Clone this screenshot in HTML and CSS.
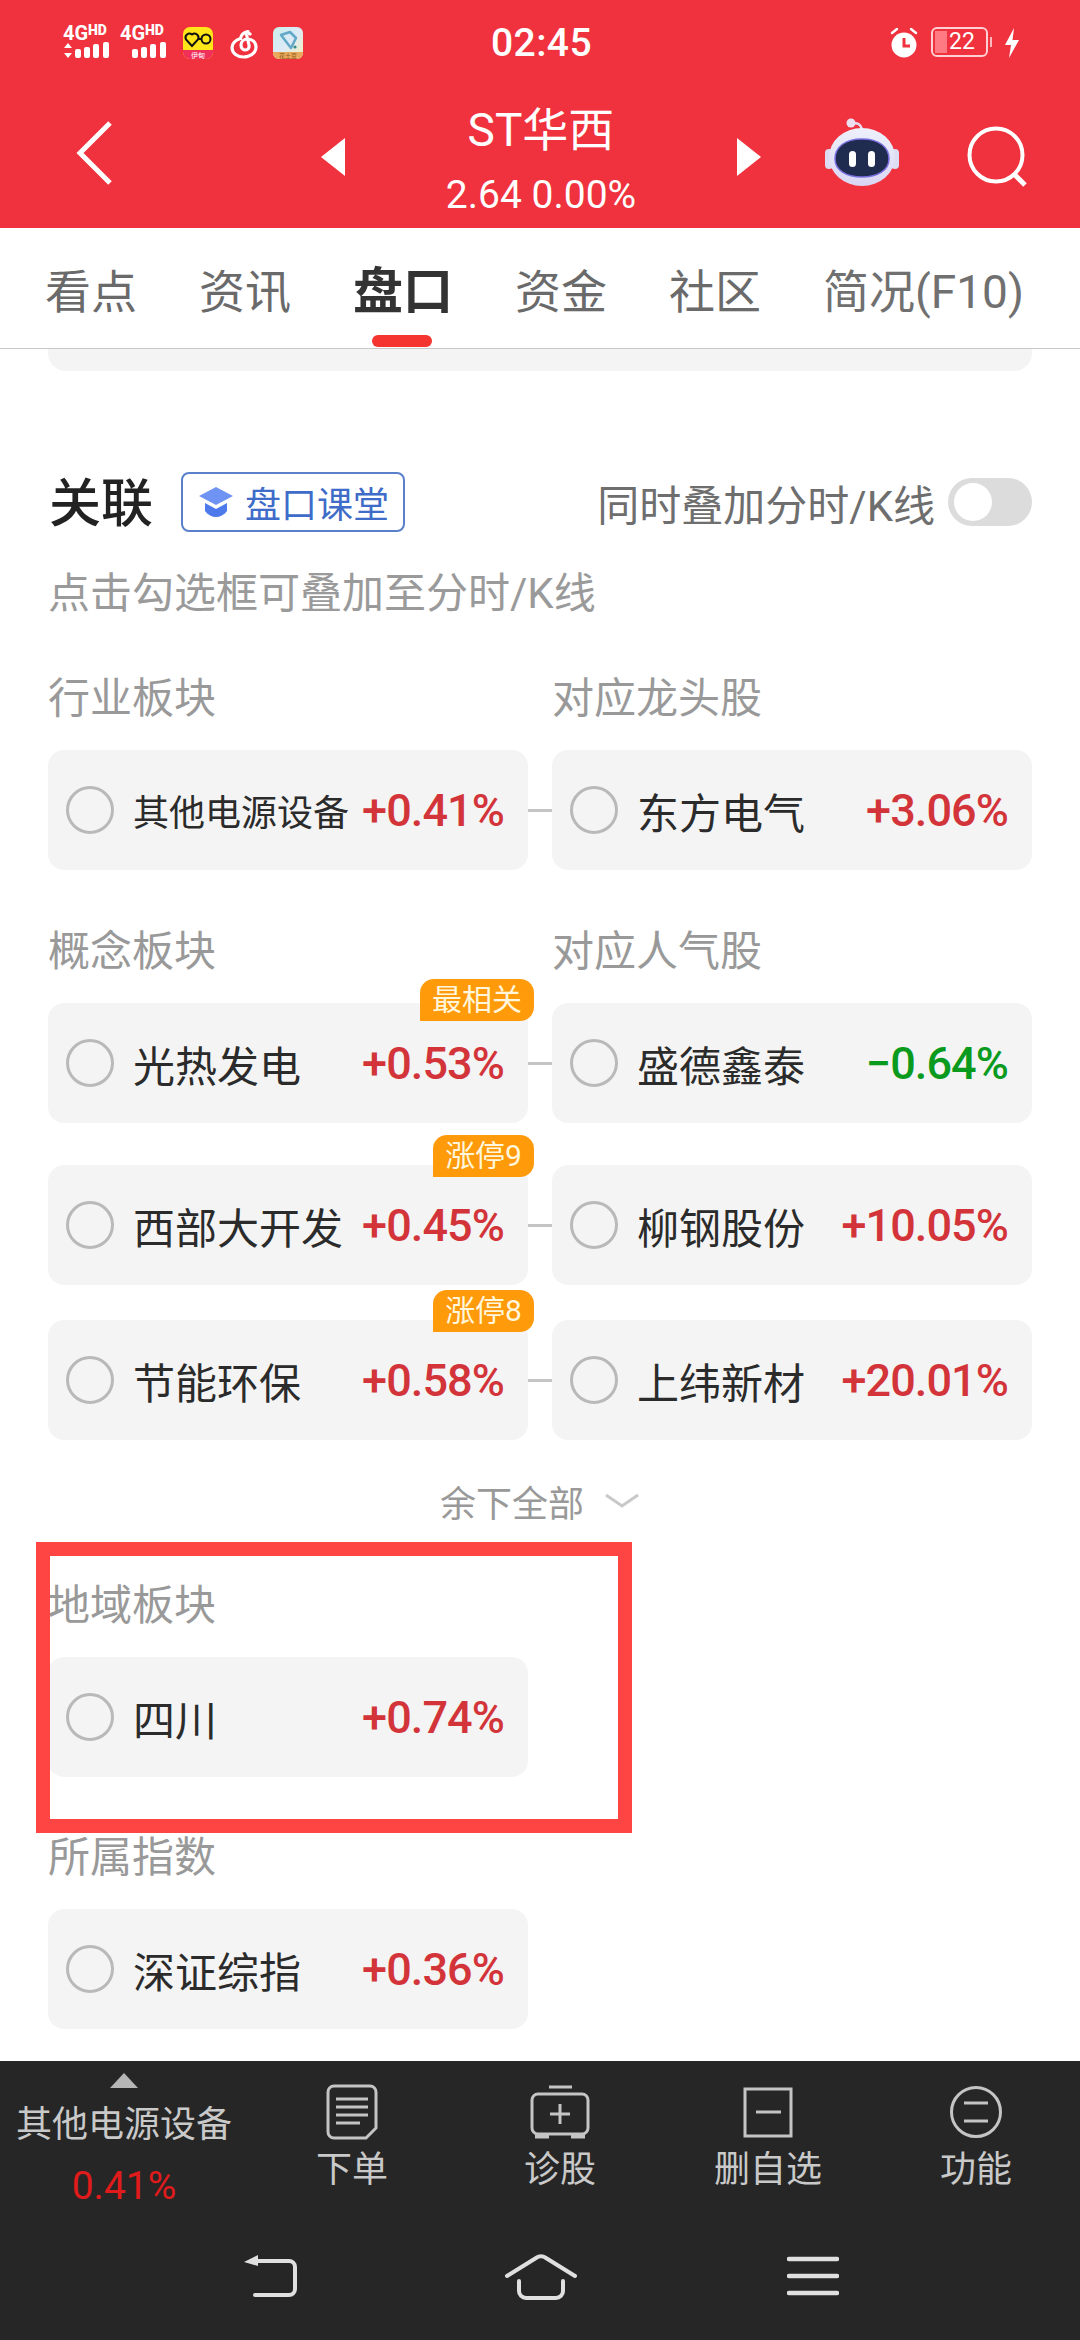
FILE: index.html
```html
<!DOCTYPE html>
<html lang="zh-CN">
<head>
<meta charset="utf-8">
<title>ST华西</title>
<link rel="stylesheet" href="styles.css">
</head>
<body>
<div class="page">
  <header class="top">
    <div class="status">
      <div class="status-left">
        <svg class="sig" width="48" height="34" viewBox="0 0 48 34"><text class="sig-g" x="0" y="15">4G</text><text class="sig-hd" x="25" y="10">HD</text><path d="M5 18l4 5H1zM5 33l4-5H1z" fill="#fff"/><rect x="12" y="24" width="6" height="9" rx="2" fill="#fff"/><rect x="21" y="22" width="6" height="11" rx="2" fill="#fff"/><rect x="30" y="19" width="6" height="14" rx="2" fill="#fff"/><rect x="40" y="17" width="6" height="16" rx="2" fill="#fff"/></svg>
        <svg class="sig" width="48" height="34" viewBox="0 0 48 34"><text class="sig-g" x="0" y="15">4G</text><text class="sig-hd" x="25" y="10">HD</text><rect x="12" y="24" width="6" height="9" rx="2" fill="#fff"/><rect x="21" y="22" width="6" height="11" rx="2" fill="#fff"/><rect x="30" y="19" width="6" height="14" rx="2" fill="#fff"/><rect x="40" y="17" width="6" height="16" rx="2" fill="#fff"/></svg>
        <svg class="mini mini-a" width="30" height="32" viewBox="0 0 30 32"><rect width="30" height="32" rx="7" fill="#ffe619"/><path d="M0 23h30v2a7 7 0 0 1-7 7H7a7 7 0 0 1-7-7z" fill="#f0305a"/><path d="M9 19L3 12.500a4 4 0 0 1 6-5 4 4 0 0 1 6 5z" fill="none" stroke="#111" stroke-width="2"/><circle cx="23" cy="12" r="4.500" fill="#ffe619" stroke="#111" stroke-width="2"/><path d="M15 12h4" stroke="#111" stroke-width="2"/><text class="mini-label" x="15" y="30.500">伊甸</text></svg>
        <svg class="mini mini-b" width="28" height="32" viewBox="0 0 28 32"><path d="M18 4.500c-5 1-7 4-7.500 7C5 13 2 17 2 20.500 2 26.500 7.500 30 13.500 30 20 30 26 26 26 20c0-5-4-8-8-8-4.500 0-7 3-7 6 0 3 2 5 4.500 5 2.500 0 4-2 3.500-5L16.500 7.500c-.3-1.500 1.500-2 3.500-.5" fill="none" stroke="#fff" stroke-width="3.200" stroke-linecap="round"/></svg>
        <svg class="mini mini-c" width="30" height="32" viewBox="0 0 30 32"><defs><linearGradient id="appFace" x1="0" y1="0" x2="1" y2="1"><stop offset="0" stop-color="#c9f0ea"/><stop offset=".5" stop-color="#ddeaf8"/><stop offset="1" stop-color="#f4efb6"/></linearGradient></defs><rect width="30" height="32" rx="6" fill="url(#appFace)"/><path d="M0 25h30v1a6 6 0 0 1-6 6H6a6 6 0 0 1-6-6z" fill="#e9a85b"/><path d="M8 8l9-3 6 6-5 10z" fill="none" stroke="#62a8c8" stroke-width="2.500" stroke-linejoin="round"/><circle cx="22" cy="20" r="1.600" fill="#3a8c88"/><text class="mini-label mini-label-c" x="15" y="30.500">花土豆</text></svg>
      </div>
      <div class="clock">02:45</div>
      <div class="status-right">
        <svg width="30" height="32" viewBox="0 0 30 32"><circle cx="15" cy="18" r="12.500" fill="#fff"/><path d="M3 6l5-4M27 6l-5-4" stroke="#fff" stroke-width="2.500" stroke-linecap="round"/><path d="M15 11v8h6" fill="none" stroke="#ef323d" stroke-width="3"/></svg>
        <div class="battery"><span class="battery-fill"></span><span class="battery-num">22</span></div>
        <span class="battery-cap"></span>
        <svg class="bolt" width="16" height="32" viewBox="0 0 16 32"><path d="M10 1L1 18h6l-2 13 10-18H8.500z" fill="#fff"/></svg>
      </div>
    </div>
    <div class="navline">
      <svg class="back" width="40" height="66" viewBox="0 0 40 66"><path d="M35 3L5 33l30 30" fill="none" stroke="#fff" stroke-width="5"/></svg>
      <svg class="tri tri-left" width="26" height="38" viewBox="0 0 26 38"><path d="M24 0v38L0 19z" fill="#fff"/></svg>
      <div class="stock">
        <div class="stock-name">ST华西</div>
        <div class="stock-quote">2.64 0.00%</div>
      </div>
      <svg class="tri tri-right" width="26" height="38" viewBox="0 0 26 38"><path d="M2 0v38l24-19z" fill="#fff"/></svg>
      <svg class="robot" width="74" height="68" viewBox="0 0 74 68"><defs><linearGradient id="shell" x1="0" y1="0" x2="0" y2="1"><stop offset="0" stop-color="#eef0fb"/><stop offset="1" stop-color="#d9d6f4"/></linearGradient></defs><path d="M27 6c5-2 9 0 10 6" fill="none" stroke="#eadff0" stroke-width="2.500"/><circle cx="26" cy="5" r="4.500" fill="#ebdff0"/><rect x="0" y="31" width="8" height="20" rx="4" fill="#dcdcf2"/><rect x="66" y="31" width="8" height="20" rx="4" fill="#dcdcf2"/><ellipse cx="37" cy="39" rx="33" ry="29" fill="url(#shell)"/><path d="M10 41c0-12 10-20 27-20s27 8 27 20c0 11-11 18-27 18S10 52 10 41z" fill="#1f2c50" stroke="#7a6fe0" stroke-width="1.500"/><rect x="24" y="33" width="7" height="16" rx="3.500" fill="#fff"/><rect x="43" y="33" width="7" height="16" rx="3.500" fill="#fff"/></svg>
      <svg class="search" width="62" height="62" viewBox="0 0 62 62"><circle cx="29" cy="29" r="26.500" fill="none" stroke="#fff" stroke-width="4"/><path d="M47 48l11 11" stroke="#fff" stroke-width="5"/></svg>
    </div>
  </header>

  <nav class="tabs">
    <span class="tab">看点</span>
    <span class="tab">资讯</span>
    <span class="tab tab-on">盘口</span>
    <span class="tab">资金</span>
    <span class="tab">社区</span>
    <span class="tab tab-fade">简况(F10)</span>
  </nav>

  <main class="content">
    <div class="scrolled-card"></div>

    <div class="head">
      <h2 class="head-title">关联</h2>
      <div class="chip">
        <svg width="36" height="32" viewBox="0 0 36 32"><path d="M18 1l17 9-17 9-17-9z" fill="#6f93f2"/><path d="M7 17v8c3 4 7 6 11 6s8-2 11-6v-8l-11 6z" fill="#4d7bec"/></svg>
        <span>盘口课堂</span>
      </div>
      <div class="head-right">
        <span class="overlay-label">同时叠加分时/K线</span>
        <span class="switch"><span class="knob"></span></span>
      </div>
    </div>
    <p class="hint">点击勾选框可叠加至分时/K线</p>

    <div class="pair labels labels-first"><span class="label">行业板块</span><span></span><span class="label">对应龙头股</span></div>
    <div class="pair">
      <div class="item"><i class="radio"></i><span class="name name-small">其他电源设备</span><b class="pct">+0.41%</b></div>
      <span class="link"></span>
      <div class="item"><i class="radio"></i><span class="name">东方电气</span><b class="pct">+3.06%</b></div>
    </div>

    <div class="pair labels"><span class="label">概念板块</span><span></span><span class="label">对应人气股</span></div>
    <div class="pair">
      <div class="item"><em class="tag tag-first">最相关</em><i class="radio"></i><span class="name">光热发电</span><b class="pct">+0.53%</b></div>
      <span class="link"></span>
      <div class="item"><i class="radio"></i><span class="name">盛德鑫泰</span><b class="pct pct-down">−0.64%</b></div>
    </div>
    <div class="pair pair-wide">
      <div class="item"><em class="tag">涨停9</em><i class="radio"></i><span class="name">西部大开发</span><b class="pct">+0.45%</b></div>
      <span class="link"></span>
      <div class="item"><i class="radio"></i><span class="name">柳钢股份</span><b class="pct">+10.05%</b></div>
    </div>
    <div class="pair pair-tight">
      <div class="item"><em class="tag">涨停8</em><i class="radio"></i><span class="name">节能环保</span><b class="pct">+0.58%</b></div>
      <span class="link"></span>
      <div class="item"><i class="radio"></i><span class="name">上纬新材</span><b class="pct">+20.01%</b></div>
    </div>

    <div class="more">
      <span>余下全部</span>
      <svg width="36" height="16" viewBox="0 0 36 16"><path d="M2 2l16 11L34 2" fill="none" stroke="#c9c9c9" stroke-width="3"/></svg>
    </div>

    <div class="pair labels labels-region"><span class="label">地域板块</span></div>
    <div class="pair">
      <div class="item"><i class="radio"></i><span class="name">四川</span><b class="pct">+0.74%</b></div>
    </div>

    <div class="pair labels labels-index"><span class="label">所属指数</span></div>
    <div class="pair">
      <div class="item"><i class="radio"></i><span class="name">深证综指</span><b class="pct">+0.36%</b></div>
    </div>
  </main>

  <footer class="bottom">
    <div class="tools">
      <div class="plate">
        <span class="plate-arrow"></span>
        <span class="plate-name">其他电源设备</span>
        <span class="plate-pct">0.41%</span>
      </div>
      <div class="tool">
        <svg width="52" height="56" viewBox="0 0 52 56"><path d="M8 2h36a6 6 0 0 1 6 6v36l-10 10H8a6 6 0 0 1-6-6V8a6 6 0 0 1 6-6z" fill="none" stroke="#c4c4c4" stroke-width="3"/><path d="M10 15h32M10 23h32M10 31h32M10 39h24" stroke="#c4c4c4" stroke-width="3"/></svg>
        <span>下单</span>
      </div>
      <div class="tool">
        <svg width="60" height="56" viewBox="0 0 60 56"><path d="M19 3h23" stroke="#c4c4c4" stroke-width="3"/><rect x="2" y="10" width="56" height="40" rx="6" fill="none" stroke="#c4c4c4" stroke-width="3"/><path d="M30 20v20M20 30h20" stroke="#c4c4c4" stroke-width="3"/><path d="M5 52h14M41 52h14" stroke="#c4c4c4" stroke-width="5"/></svg>
        <span>诊股</span>
      </div>
      <div class="tool">
        <svg width="52" height="56" viewBox="0 0 52 56"><rect x="3" y="5" width="46" height="47" fill="none" stroke="#c4c4c4" stroke-width="3"/><path d="M14 28h25" stroke="#c4c4c4" stroke-width="3"/></svg>
        <span>删自选</span>
      </div>
      <div class="tool">
        <svg width="54" height="56" viewBox="0 0 54 56"><circle cx="27" cy="28" r="24.500" fill="none" stroke="#c4c4c4" stroke-width="3"/><path d="M15 19h24M15 37h24" stroke="#c4c4c4" stroke-width="3"/></svg>
        <span>功能</span>
      </div>
    </div>
    <div class="sysnav">
      <svg width="54" height="44" viewBox="0 0 54 44"><path d="M10 7h36a6 6 0 0 1 6 6v22a6 6 0 0 1-6 6H12" fill="none" stroke="#e0e0e0" stroke-width="4" stroke-linecap="round"/><path d="M15 1v11L1 8z" fill="#e0e0e0"/></svg>
      <svg width="72" height="46" viewBox="0 0 72 46"><path d="M2 22L31 4c3-2 7-2 10 0l29 18" fill="none" stroke="#e0e0e0" stroke-width="4" stroke-linecap="round"/><path d="M14 27v10a7 7 0 0 0 7 7h30a7 7 0 0 0 7-7V27" fill="none" stroke="#e0e0e0" stroke-width="4" stroke-linecap="round"/></svg>
      <svg width="52" height="44" viewBox="0 0 52 44"><path d="M2 5h48M2 22h48M2 39h48" stroke="#e0e0e0" stroke-width="4.500" stroke-linecap="round"/></svg>
    </div>
  </footer>

  <div class="highlight"></div>
</div>
</body>
</html>
```

FILE: styles.css
```css
* { box-sizing: border-box; }

html, body { margin: 0; padding: 0; }

body {
  background: #fff;
  font-family: Roboto, "Noto Sans CJK SC", sans-serif;
}

.page {
  position: relative;
  width: 1080px;
  height: 2340px;
  display: flex;
  flex-direction: column;
  overflow: hidden;
}

/* red header: system status line and stock title */
.top {
  height: 228px;
  background: #ef323d;
  color: #fff;
  flex: none;
}

.status {
  height: 84px;
  padding: 25px 60px 0 63px;
  display: grid;
  grid-template-columns: 1fr auto 1fr;
  align-items: start;
}

.status-left { display: flex; align-items: flex-start; }

.sig { margin-right: 9px; overflow: visible; }
.sig-g { font: 700 20px Roboto, sans-serif; fill: #fff; }
.sig-hd { font: 900 14px Roboto, sans-serif; fill: #fff; }

.mini { margin-top: 2px; }
.mini-a { margin-left: 6px; }
.mini-b { margin-left: 17px; }
.mini-c { margin-left: 15px; }
.mini-label { font: 7px "Noto Sans CJK SC", sans-serif; fill: #fff; text-anchor: middle; }
.mini-label-c { font-size: 6px; fill: #8a5a20; }

.clock {
  font-size: 39px;
  font-weight: 500;
  line-height: 34px;
  margin-top: 1px;
  letter-spacing: .4px;
}

.status-right { display: flex; justify-content: flex-end; align-items: flex-start; margin-top: 2px; }

.battery {
  position: relative;
  margin-left: 12px;
  width: 57px;
  height: 30px;
  border: 2px solid #ffd0d3;
  border-radius: 6px;
  overflow: hidden;
  text-align: center;
}
.battery-fill {
  position: absolute;
  left: 2px; top: 2px; bottom: 2px;
  width: 12px;
  background: #ff7a82;
}
.battery-num {
  position: relative;
  display: block;
  padding-left: 5px;
  font-size: 23px;
  line-height: 26px;
  color: #fff;
}
.battery-cap {
  width: 2px;
  height: 10px;
  margin: 10px 0 0 2px;
  background: #ffb8bc;
}
.bolt { margin-left: 12px; }

.navline {
  height: 144px;
  padding-left: 75px;
  display: flex;
  align-items: flex-start;
}
.back { margin-top: 36px; flex: none; }
.tri { margin-top: 54px; flex: none; }
.tri-left { margin-left: 206px; }
.stock {
  width: 388px;
  text-align: center;
  flex: none;
}
.stock-name {
  font-size: 46px;
  line-height: 60px;
  margin-top: 16px;
}
.stock-quote {
  font-size: 39px;
  line-height: 50px;
  margin-top: 10px;
}
.robot { margin: 34px 0 0 64px; flex: none; }
.search { margin: 42px 0 0 68px; flex: none; }

/* tab strip */
.tabs {
  position: relative;
  height: 121px;
  padding: 0 0 0 45px;
  display: flex;
  gap: 62px;
  align-items: center;
  flex: none;
  border-bottom: 1px solid #c8c8c8;
  font-size: 46px;
  color: #6a6a6a;
  white-space: nowrap;
}
.tab { position: relative; line-height: 60px; margin-top: 8px; }
.tab-on { font-size: 50px; font-weight: 700; color: #333; }
.tab-on::after {
  content: "";
  position: absolute;
  left: 19px;
  right: 21px;
  top: 73px;
  height: 12px;
  border-radius: 6px;
  background: #f5352f;
}
.tab-fade { color: #707070; }

/* scrolling body */
.content {
  flex: 1;
  min-height: 0;
  padding: 0 48px;
  overflow: hidden;
}

.scrolled-card {
  height: 22px;
  background: #f4f4f4;
  border-radius: 0 0 18px 18px;
}

.head {
  margin-top: 101px;
  height: 60px;
  display: flex;
  align-items: center;
}
.head-title {
  margin: 6px 0 0 1px;
  font-size: 52px;
  font-weight: 500;
  line-height: 60px;
  color: #222;
}
.chip {
  margin-left: 28px;
  width: 224px;
  height: 60px;
  padding-left: 15px;
  display: flex;
  align-items: center;
  gap: 11px;
  border: 2px solid #5a80cc;
  border-radius: 8px;
  font-size: 36px;
  color: #3e6cc8;
}
.head-right {
  margin-left: auto;
  display: flex;
  align-items: center;
  gap: 13px;
}
.overlay-label { font-size: 42px; color: #6e6e6e; }
.switch {
  display: flex;
  align-items: center;
  width: 84px;
  height: 48px;
  padding-left: 6px;
  border-radius: 24px;
  background: #dcdcdc;
}
.knob {
  width: 38px;
  height: 38px;
  border-radius: 50%;
  background: #fff;
}

.hint {
  margin: 32px 0 0;
  font-size: 42px;
  line-height: 60px;
  color: #9a9a9a;
}

/* two columns of cards, joined by a short rule */
.pair {
  display: grid;
  grid-template-columns: 480px 24px 480px;
  align-items: center;
}
.labels { margin-top: 52px; margin-bottom: 21px; }
.labels-first { margin-top: 45px; }
.labels-region { margin-top: 45px; margin-bottom: 21px; }
.labels-index { margin-top: 51px; }
.pair-wide { margin-top: 42px; }
.pair-tight { margin-top: 35px; }

.label {
  font-size: 42px;
  line-height: 60px;
  color: #999;
}

.link { height: 3px; background: #c4c4c4; }

.item {
  position: relative;
  height: 120px;
  padding: 0 24px 0 18px;
  display: flex;
  align-items: center;
  background: #f4f4f4;
  border-radius: 16px;
}
.radio {
  width: 48px;
  height: 48px;
  border: 3px solid #b9b9b9;
  border-radius: 50%;
  flex: none;
}
.name {
  margin-left: 19px;
  font-size: 42px;
  color: #2b2b2b;
  white-space: nowrap;
}
.name-small { font-size: 36px; }
.pct {
  margin-left: auto;
  font-size: 45px;
  font-weight: 500;
  letter-spacing: -.9px;
  color: #d2343a;
  white-space: nowrap;
}
.pct-down { color: #0a9a1e; }

.tag {
  position: absolute;
  right: -6px;
  top: -30px;
  height: 42px;
  padding: 0 12px;
  font-size: 30px;
  font-style: normal;
  line-height: 42px;
  color: #fff6dc;
  background: #ff9a0a;
  border-radius: 14px 14px 14px 0;
}
.tag-first { top: -24px; }

.more {
  margin-top: 31px;
  height: 60px;
  display: flex;
  align-items: center;
  justify-content: center;
  gap: 20px;
  font-size: 36px;
  color: #999;
}

/* dark footer: toolbar and system navigation */
.bottom {
  height: 279px;
  flex: none;
  background: #262626;
}
.tools {
  height: 193px;
  display: grid;
  grid-template-columns: 248px repeat(4, 208px);
}
.plate, .tool {
  display: flex;
  flex-direction: column;
  align-items: center;
  white-space: nowrap;
}
.plate { padding-top: 12px; }
.plate-arrow {
  width: 0;
  height: 0;
  border: solid transparent;
  border-width: 0 14px 15px;
  border-bottom-color: #b5b5b5;
}
.plate-name {
  margin-top: 12px;
  font-size: 36px;
  line-height: 50px;
  color: #c9c9c9;
}
.plate-pct {
  margin-top: 11px;
  font-size: 39px;
  line-height: 50px;
  color: #e01b1b;
}
.tool {
  padding-top: 23px;
  font-size: 36px;
  color: #c9c9c9;
}
.tool span { margin-top: 5px; line-height: 50px; }

.sysnav {
  padding-left: 135px;
  display: grid;
  grid-template-columns: 270px 272px 272px;
  justify-items: center;
}

/* annotation frame drawn over the regional-sector block */
.highlight {
  position: absolute;
  left: 36px;
  top: 1542px;
  width: 596px;
  height: 291px;
  border: 14px solid #ff4444;
}
```
